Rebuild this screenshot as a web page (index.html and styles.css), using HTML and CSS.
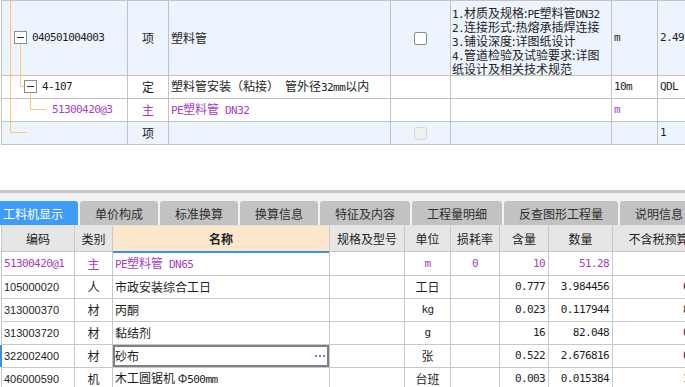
FILE: index.html
```html
<!DOCTYPE html>
<html lang="zh-CN">
<head>
<meta charset="utf-8">
<title>工料机显示</title>
<link rel="stylesheet" href="styles.css">
</head>
<body>
<div class="page">
  <div class="upper">
    <div class="tree-wrap">
      <div class="grid-top">
        <div class="cell bl lv1"><span class="a">040501004003</span></div>
        <div class="cell bl ctr">项</div>
        <div class="cell bl">塑料管</div>
        <div class="cell bl ctr"><span class="chk"></span></div>
        <div class="cell bl desc">
          <div class="ln"><span class="a">1.</span>材质及规格:<span class="a">PE</span>塑料管<span class="a">DN32</span></div>
          <div class="ln"><span class="a">2.</span>连接形式:热熔承插焊连接</div>
          <div class="ln"><span class="a">3.</span>铺设深度:详图纸设计</div>
          <div class="ln"><span class="a">4.</span>管道检验及试验要求:详图</div>
          <div class="ln">纸设计及相关技术规范</div>
        </div>
        <div class="cell bl"><span class="a">m</span></div>
        <div class="cell bl"><span class="a">2.49</span></div>

        <div class="cell lv2"><span class="a">4-107</span></div>
        <div class="cell ctr">定</div>
        <div class="cell"><span class="t">塑料管安装（粘接）<span class="a"> </span>管外径<span class="a">32mm</span>以内</span></div>
        <div class="cell"></div>
        <div class="cell"></div>
        <div class="cell"><span class="a">10m</span></div>
        <div class="cell"><span class="a">QDL</span></div>

        <div class="cell lv3 p"><span class="a">51300420@3</span></div>
        <div class="cell ctr p">主</div>
        <div class="cell p"><span class="t"><span class="a">PE</span>塑料管<span class="a"> DN32</span></span></div>
        <div class="cell"></div>
        <div class="cell"></div>
        <div class="cell p"><span class="a">m</span></div>
        <div class="cell"></div>

        <div class="cell bl"></div>
        <div class="cell bl ctr">项</div>
        <div class="cell bl"></div>
        <div class="cell bl ctr"><span class="chk off"></span></div>
        <div class="cell bl"></div>
        <div class="cell bl"></div>
        <div class="cell bl"><span class="a">1</span></div>
      </div>
      <svg class="tree" width="130" height="145" viewBox="0 0 130 145">
        <path d="M10.5 0V132.5H27M20.5 44V86.5H24.5M30.5 93V109.5H46" fill="none" stroke="#fcc777" stroke-width="1"/>
        <rect x="14.5" y="31.5" width="12" height="12" fill="#fff" stroke="#8c8c8c"/>
        <path d="M17 37.5H24" stroke="#333" stroke-width="1"/>
        <rect x="24.5" y="80.5" width="12" height="12" fill="#fff" stroke="#8c8c8c"/>
        <path d="M27 86.5H34" stroke="#333" stroke-width="1"/>
      </svg>
    </div>
  </div>
  <div class="splitter"></div>
  <div class="tabbar">
    <div class="tab on">工料机显示</div>
    <div class="tab">单价构成</div>
    <div class="tab">标准换算</div>
    <div class="tab">换算信息</div>
    <div class="tab">特征及内容</div>
    <div class="tab">工程量明细</div>
    <div class="tab">反查图形工程量</div>
    <div class="tab">说明信息</div>
  </div>
  <div class="grid-bot">
    <div class="cell h">编码</div>
    <div class="cell h">类别</div>
    <div class="cell h hn">名称</div>
    <div class="cell h">规格及型号</div>
    <div class="cell h">单位</div>
    <div class="cell h">损耗率</div>
    <div class="cell h">含量</div>
    <div class="cell h">数量</div>
    <div class="cell h">不含税预算价</div>

    <div class="cell code p"><span class="a">51300420@1</span></div>
    <div class="cell ctr p">主</div>
    <div class="cell nm p"><span class="t"><span class="a">PE</span>塑料管<span class="a"> DN65</span></span></div>
    <div class="cell"></div>
    <div class="cell ctr p"><span class="a">m</span></div>
    <div class="cell ctr p"><span class="a">0</span></div>
    <div class="cell num p"><span class="a">10</span></div>
    <div class="cell num p"><span class="a">51.28</span></div>
    <div class="cell"></div>

    <div class="cell code">105000020</div>
    <div class="cell ctr">人</div>
    <div class="cell nm">市政安装综合工日</div>
    <div class="cell"></div>
    <div class="cell ctr">工日</div>
    <div class="cell"></div>
    <div class="cell num"><span class="a">0.777</span></div>
    <div class="cell num"><span class="a">3.984456</span></div>
    <div class="cell num"><span class="a">69.00</span></div>

    <div class="cell code">313000370</div>
    <div class="cell ctr">材</div>
    <div class="cell nm">丙酮</div>
    <div class="cell"></div>
    <div class="cell ctr"><span class="a">kg</span></div>
    <div class="cell"></div>
    <div class="cell num"><span class="a">0.023</span></div>
    <div class="cell num"><span class="a">0.117944</span></div>
    <div class="cell num"><span class="a">8.960</span></div>

    <div class="cell code">313003720</div>
    <div class="cell ctr">材</div>
    <div class="cell nm">黏结剂</div>
    <div class="cell"></div>
    <div class="cell ctr"><span class="a">g</span></div>
    <div class="cell"></div>
    <div class="cell num"><span class="a">16</span></div>
    <div class="cell num"><span class="a">82.048</span></div>
    <div class="cell num"><span class="a">0.031</span></div>

    <div class="cell code mark">322002400</div>
    <div class="cell ctr">材</div>
    <div class="cell nm sel">砂布<span class="dots"><i></i><i></i><i></i></span></div>
    <div class="cell"></div>
    <div class="cell ctr">张</div>
    <div class="cell"></div>
    <div class="cell num"><span class="a">0.522</span></div>
    <div class="cell num"><span class="a">2.676816</span></div>
    <div class="cell num"><span class="a">0.350</span></div>

    <div class="cell code">406000590</div>
    <div class="cell ctr">机</div>
    <div class="cell nm"><span class="t">木工圆锯机 Φ<span class="a">500mm</span></span></div>
    <div class="cell"></div>
    <div class="cell ctr">台班</div>
    <div class="cell"></div>
    <div class="cell num"><span class="a">0.003</span></div>
    <div class="cell num"><span class="a">0.015384</span></div>
    <div class="cell num"><span class="a">13.17</span></div>
  </div>
</div>
</body>
</html>
```
FILE: styles.css
```css
* { box-sizing: border-box; margin: 0; padding: 0; }
html, body { width: 685px; height: 387px; overflow: hidden; background: #fff; }
body {
  font-family: "Noto Sans CJK SC", "Liberation Sans", sans-serif;
  font-size: 12px;
  color: #1e1e1e;
}
.page { width: 685px; height: 387px; overflow: hidden; }
.a {
  font-family: "DejaVu Sans Mono", "Liberation Mono", monospace;
  font-size: 11px;
  letter-spacing: -0.6px;
  white-space: pre;
}
.t { white-space: nowrap; }
.p { color: #a63ec6; }

.upper { height: 190px; }
.tree-wrap { position: relative; }
.grid-top {
  display: grid;
  grid-template-columns: 125px 40px 221px 59px 160px 45px 100px;
  grid-template-rows: 74px 22px 22px 22px;
  gap: 1px;
  padding: 1px 0 1px 1px;
  margin-left: 1px;
  background: #c3c3c3;
  width: max-content;
}
.cell {
  background: #fff;
  display: flex;
  align-items: center;
  padding-left: 2px;
  white-space: nowrap;
  overflow: hidden;
  line-height: 14px;
}
.bl { background: #edf4fe; }
.ctr { justify-content: center; padding-left: 0; }
.lv1 { padding-left: 30px; }
.lv2 { padding-left: 40px; }
.lv3 { padding-left: 50px; }
.desc {
  display: block;
  padding: 5px 0 0 1px;
  color: #222;
}
.ln { height: 14px; line-height: 14px; white-space: nowrap; }
.chk {
  width: 13px;
  height: 13px;
  border: 1px solid #8a8a8a;
  border-radius: 2px;
  background: #fff;
}
.chk.off {
  border-color: #d6d6d6;
  background: #f0f0f0;
  border-radius: 3px;
}
.tree { position: absolute; left: 0; top: 0; pointer-events: none; }

.splitter { height: 3px; background: #c6c6c6; }
.tabbar {
  display: flex;
  gap: 2px;
  margin-left: -12px;
  padding-top: 8px;
  background: #f2f2f2;
  border-bottom: 1px solid #e2e2e2;
}
.tab {
  flex: none;
  height: 24px;
  padding: 0 15px;
  display: flex;
  align-items: center;
  background: #c2c2c2;
  color: #2e2e2e;
  border-radius: 3px 3px 0 0;
  white-space: nowrap;
}
.tab.on { background: #409df7; color: #fff; }

.grid-bot {
  display: grid;
  grid-template-columns: 72px 37px 216px 74px 45px 48px 48px 63px 103px;
  grid-template-rows: 25px 23px repeat(5, 22px);
  gap: 1px;
  padding: 0 1px;
  margin-left: 1px;
  background: #c8c8c8;
  width: max-content;
}
.h { background: #e6e6e6; justify-content: center; padding-left: 0; color: #222; }
.hn {
  background: #fde8cc;
  font-weight: bold;
  position: relative;
  z-index: 1;
  overflow: visible;
  box-shadow: 0 2px 0 #3c90e4;
}
.code { font-family: "Liberation Sans", sans-serif; font-size: 11px; }
.num { justify-content: flex-end; padding-right: 3px; }
.nm { padding-left: 2px; }
.sel { box-shadow: inset 0 0 0 2px #808080; }
.dots { margin-left: auto; margin-right: 4px; display: flex; gap: 2px; }
.dots i { display: block; width: 2px; height: 2px; background: #4a8fdb; }
.mark { box-shadow: -2px 0 0 #3a8de6; }
```
